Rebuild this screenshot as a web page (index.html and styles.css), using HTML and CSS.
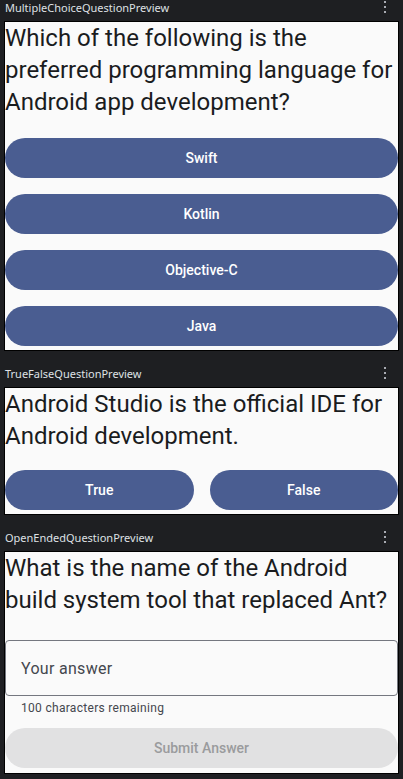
FILE: index.html
```html
<!DOCTYPE html>
<html>
<head>
<meta charset="utf-8">
<link rel="stylesheet" href="styles.css">
</head>
<body>
<div class="panel">
  <section class="preview">
    <div class="label-row">
      <span class="label">MultipleChoiceQuestionPreview</span>
      <svg class="kebab" width="4" height="14" viewBox="0 0 4 14"><rect x="1" y="1" width="2" height="2"/><rect x="1" y="6" width="2" height="2"/><rect x="1" y="11" width="2" height="2"/></svg>
    </div>
    <div class="frame frame-mc">
      <div class="question">Which of the following is the preferred programming language for Android app development?</div>
      <div class="options">
        <div class="btn">Swift</div>
        <div class="btn">Kotlin</div>
        <div class="btn">Objective-C</div>
        <div class="btn">Java</div>
      </div>
    </div>
  </section>
  <section class="preview">
    <div class="label-row">
      <span class="label">TrueFalseQuestionPreview</span>
      <svg class="kebab" width="4" height="14" viewBox="0 0 4 14"><rect x="1" y="1" width="2" height="2"/><rect x="1" y="6" width="2" height="2"/><rect x="1" y="11" width="2" height="2"/></svg>
    </div>
    <div class="frame frame-tf">
      <div class="question">Android Studio is the official IDE for Android development.</div>
      <div class="tf-row">
        <div class="btn">True</div>
        <div class="btn">False</div>
      </div>
    </div>
  </section>
  <section class="preview">
    <div class="label-row">
      <span class="label">OpenEndedQuestionPreview</span>
      <svg class="kebab" width="4" height="14" viewBox="0 0 4 14"><rect x="1" y="1" width="2" height="2"/><rect x="1" y="6" width="2" height="2"/><rect x="1" y="11" width="2" height="2"/></svg>
    </div>
    <div class="frame frame-oe">
      <div class="question">What is the name of the Android build system tool that replaced Ant?</div>
      <div class="field"><span class="placeholder">Your answer</span></div>
      <div class="helper">100 characters remaining</div>
      <div class="btn btn-disabled">Submit Answer</div>
    </div>
  </section>
</div>
</body>
</html>
```

FILE: styles.css
```css
html, body {
  margin: 0;
  padding: 0;
  background: #1e1f22;
}
body {
  width: 403px;
  height: 779px;
  overflow: hidden;
}
.panel {
  display: flex;
  flex-direction: column;
  gap: 15px;
  padding: 0 4px;
}
.preview {
  display: flex;
  flex-direction: column;
}
.label-row {
  height: 21px;
  display: flex;
  align-items: flex-start;
  justify-content: space-between;
  padding: 0 12px 0 1px;
}
.label {
  font-family: "Noto Sans", "Open Sans", sans-serif;
  font-size: 11px;
  line-height: 14px;
  padding-top: 1px;
  color: #dfe1e5;
}
.kebab {
  fill: #a9acb3;
  margin-top: 0;
}
.frame {
  border: 1px solid #000;
  background: #fafafa;
  display: flex;
  flex-direction: column;
  font-family: Roboto, sans-serif;
}
.question {
  font-size: 24px;
  line-height: 32px;
  color: #1a1c1e;
  padding-right: 2px;
}
.btn {
  height: 40px;
  border-radius: 20px;
  background: #4a5d91;
  color: #fff;
  font-family: Roboto, sans-serif;
  font-weight: 500;
  font-size: 14px;
  display: flex;
  align-items: center;
  justify-content: center;
}
.frame-mc .options {
  display: flex;
  flex-direction: column;
  gap: 16px;
  margin-top: 20px;
  padding-bottom: 4px;
}
.frame-tf .tf-row {
  display: flex;
  gap: 16px;
  margin-top: 18px;
  padding-bottom: 4px;
}
.tf-row .btn {
  flex: 1;
}
.field {
  margin-top: 24px;
  height: 54px;
  border: 1px solid #74777f;
  border-radius: 4px;
  display: flex;
  align-items: center;
  padding-left: 15px;
}
.placeholder {
  font-size: 16px;
  color: #44474e;
  letter-spacing: 0.3px;
}
.helper {
  margin-top: 4px;
  padding-left: 16px;
  font-size: 12px;
  line-height: 16px;
  color: #44474e;
  letter-spacing: 0.3px;
}
.btn-disabled {
  margin-top: 12px;
  margin-bottom: 5px;
  background: #e1e1e2;
  color: #9a9b9d;
}
```
